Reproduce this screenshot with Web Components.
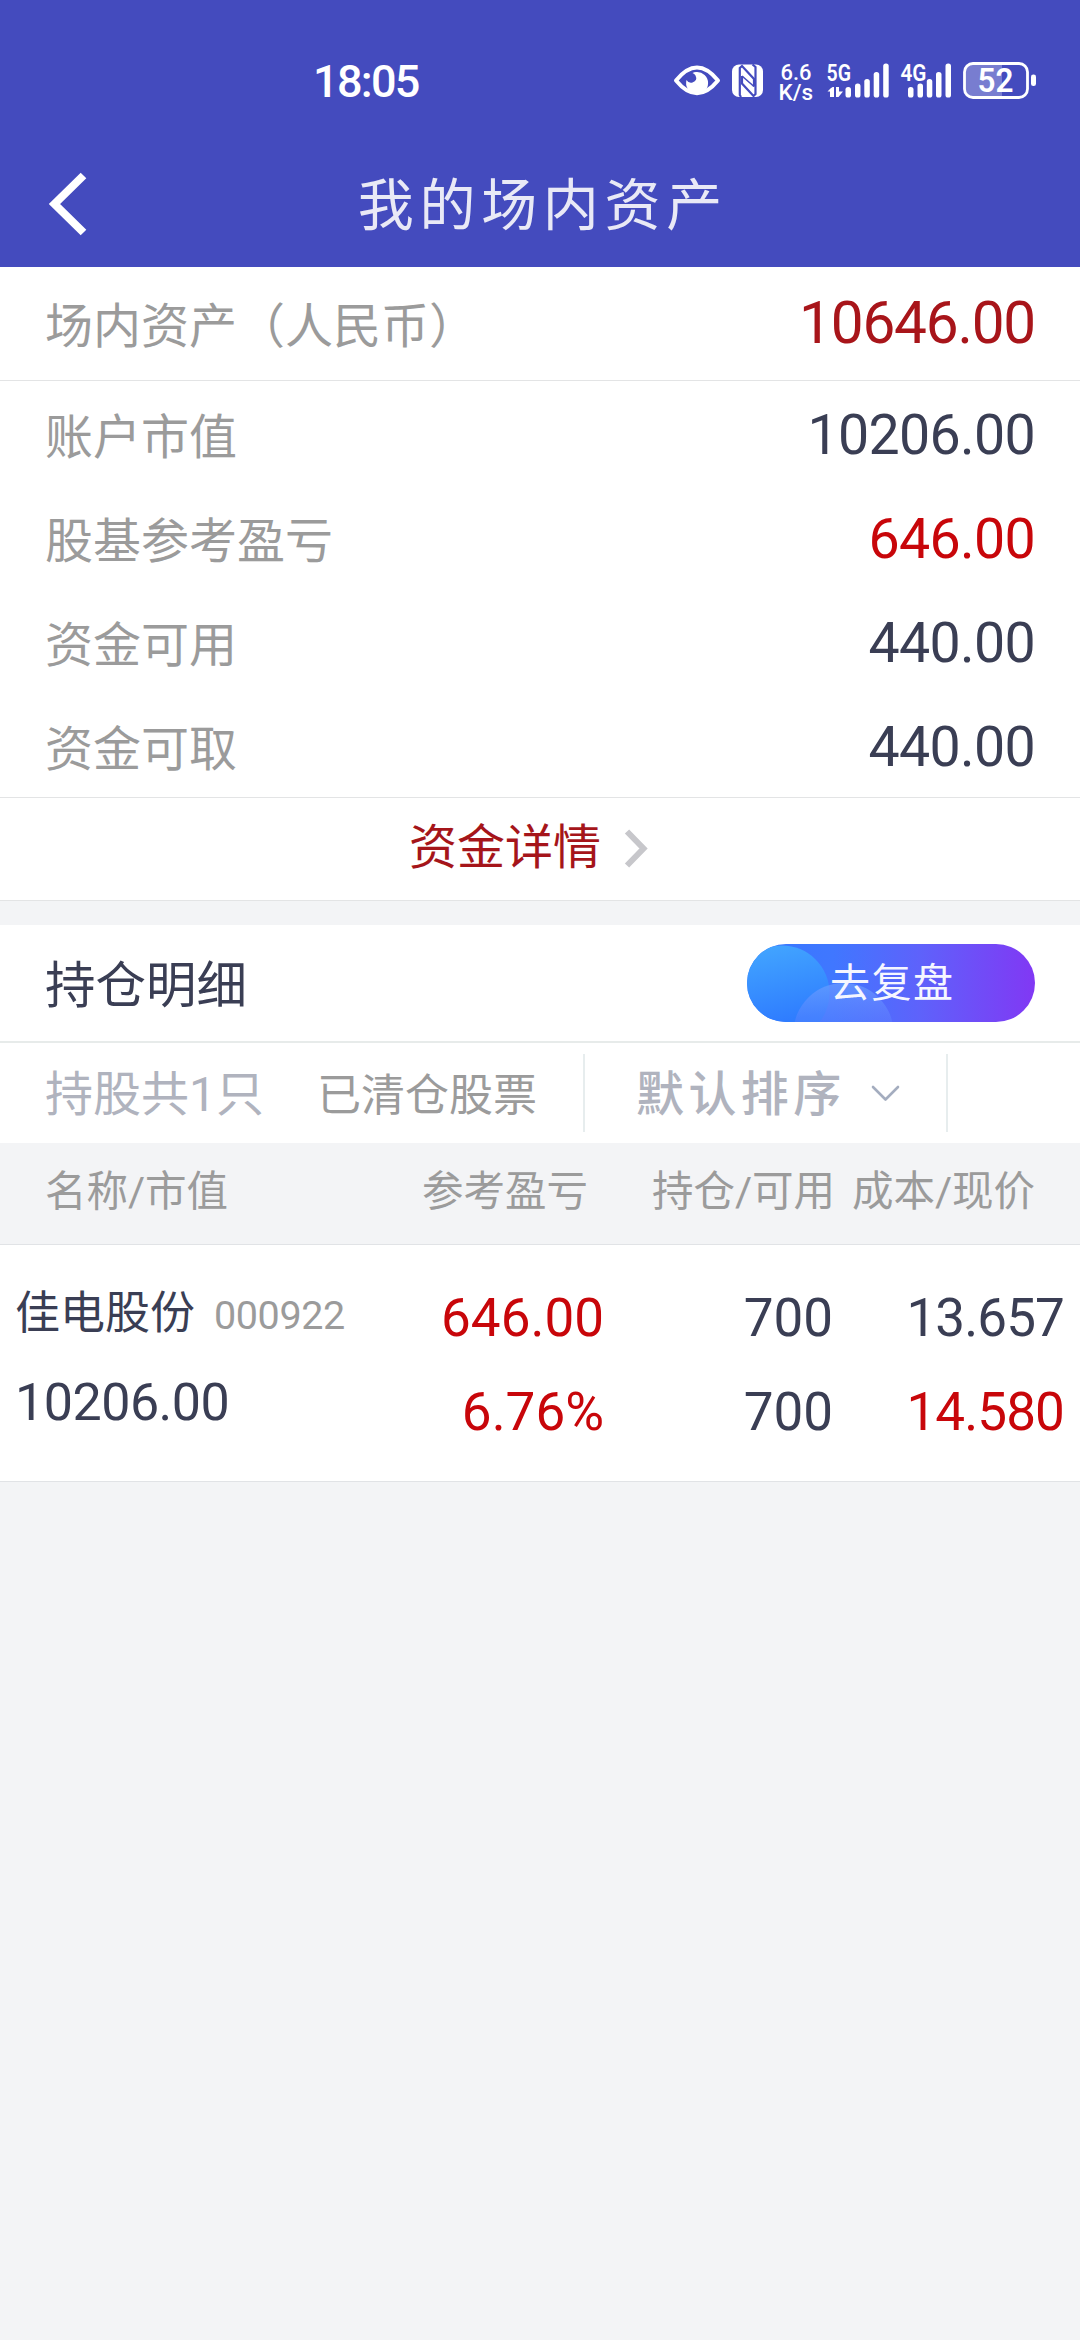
<!DOCTYPE html>
<html lang="zh-CN">
<head>
<meta charset="utf-8">
<title>我的场内资产</title>
<style>
html,body{margin:0;padding:0}
body{width:1080px;min-height:2340px;background:#f3f4f6;color:#3a3e54;font-family:Roboto,"Noto Sans CJK SC",sans-serif;font-size:48px;-webkit-font-smoothing:antialiased;overflow-x:hidden}
</style>
</head>
<body>
<asset-page></asset-page>
<script>
const define = (name, html) => {
  const t = document.createElement('template');
  t.innerHTML = html;
  customElements.define(name, class extends HTMLElement {
    constructor() {
      super();
      this.attachShadow({ mode: 'open' }).appendChild(t.content.cloneNode(true));
    }
  });
};

define('status-bar', `
<style>
:host{display:flex;height:138px;background:#444bbe;color:#fff;box-sizing:border-box;padding:54px 44px 0 313px;justify-content:space-between;align-items:flex-start}
.time{font-size:45px;font-weight:500;line-height:55px;letter-spacing:-1.700px;white-space:nowrap}
svg{display:block;fill:#fff;font-family:Roboto,sans-serif}
</style>
<span class="time">18:05</span>
<svg width="364" height="54" viewBox="672 54 364 54">
  <path d="M676 80.500Q697 54.500 718 80.500Q697 106 676 80.500Z" fill="none" stroke="#fff" stroke-width="4" stroke-linejoin="round"/>
  <path d="M696 72A11 11 0 1 1 686.500 80Q688.500 83.500 692.500 82.500Q698 80.500 695.500 75.500Q694.500 73.500 692.500 73Q694 72 696 72Z"/>
  <rect x="732" y="64.500" width="31" height="32.500" rx="7"/>
  <g fill="none" stroke="#444bbe" stroke-width="2.200"><path d="M741 97L739.800 95V68L742 66L754 79V86.500"/><path d="M752.500 64.500L755.500 67V94L753.500 96L742 83.500V76"/><path d="M742 76L754 86.500" stroke-width="1.600"/></g>
  <text x="780.500" y="79.500" font-size="22" font-weight="500" textLength="31" lengthAdjust="spacingAndGlyphs">6.6</text>
  <text x="778.500" y="100" font-size="22.500" font-weight="500" textLength="34.500" lengthAdjust="spacingAndGlyphs">K/s</text>
  <text x="826.500" y="80.500" font-size="23" font-weight="600" textLength="24.500" lengthAdjust="spacingAndGlyphs">5G</text>
  <path d="M831.500 97V87.500L827.500 91.500H830V97ZM832.500 87L828 91.500H831V97H834V87ZM836 87H839V91.500L843 91.500L838.500 97H836Z"/>
  <g><rect x="845.500" y="87" width="5.500" height="10.500" rx="2.600"/><rect x="855" y="83.500" width="5.500" height="14" rx="2.600"/><rect x="864.300" y="79" width="5.500" height="18.500" rx="2.600"/><rect x="873.700" y="72" width="5.500" height="25.500" rx="2.600"/><rect x="883.200" y="63.500" width="5.500" height="34" rx="2.600"/></g>
  <text x="900.500" y="80.500" font-size="23" font-weight="600" textLength="26" lengthAdjust="spacingAndGlyphs">4G</text>
  <g><rect x="908" y="87" width="5.500" height="10.500" rx="2.600"/><rect x="917.500" y="83.500" width="5.500" height="14" rx="2.600"/><rect x="926.800" y="79" width="5.500" height="18.500" rx="2.600"/><rect x="936" y="72" width="5.500" height="25.500" rx="2.600"/><rect x="945.500" y="63.500" width="5.500" height="34" rx="2.600"/></g>
  <path d="M1002 64H973Q965 64 965 72V89Q965 97 973 97H1002Z" opacity=".28"/>
  <rect x="964.500" y="63.500" width="63" height="34" rx="8.500" fill="none" stroke="#fff" stroke-width="2.800"/>
  <rect x="1031" y="74.500" width="5" height="11.500" rx="2.300"/>
  <text x="977.500" y="92" font-size="33" font-weight="600" textLength="36" lengthAdjust="spacingAndGlyphs">52</text>
</svg>`);

define('nav-bar', `
<style>
:host{display:grid;grid-template-columns:90px 1fr 90px;height:129px;background:#444bbe;color:#e9e9f6}
svg{display:block;margin:34px 0 0 48px}
.t{text-align:center;font-size:56px;letter-spacing:5.700px;text-indent:5.700px;line-height:137px;height:129px;white-space:nowrap}
</style>
<svg width="40" height="66" viewBox="48 172 40 66"><path d="M83.500 175.500L54.500 204L83.500 232.500" fill="none" stroke="#fff" stroke-width="8"/></svg>
<div class="t"><slot></slot></div><span></span>`);

define('asset-row', `
<style>
:host{display:flex;box-sizing:border-box;height:104px;padding:3px 45px 0 45px;justify-content:space-between;align-items:baseline;line-height:104px;white-space:nowrap}
:host([total]){height:114px;padding-top:0;line-height:113px;border-bottom:1px solid #e3e4e5}
.l{color:#9b9b9b;font-size:48px}
.v{font-size:55.500px;letter-spacing:-.700px}
:host([total]) .v{font-size:58.500px;color:#a8151a;letter-spacing:-1.200px}
:host([up]) .v{color:#c8060a}
</style>
<span class="l"><slot></slot></span><span class="v"><slot name="value"></slot></span>`);

define('fund-link', `
<style>
:host{display:flex;box-sizing:border-box;height:104px;border-top:1px solid #e3e4e5;border-bottom:1px solid #e3e4e5;background:#fff;color:#a5151a;padding-left:409px;line-height:100px;align-items:flex-start}
svg{display:block;margin:30px 0 0 20px}
</style>
<span><slot></slot></span>
<svg width="28" height="42" viewBox="0 0 28 42"><path d="M6 3.500L22.500 20.500L6 37.500" fill="none" stroke="#c7c7cb" stroke-width="6"/></svg>`);

define('review-button', `
<style>
:host{display:grid;width:288px;height:78px;border-radius:39px;overflow:hidden;color:#f5f6ff}
svg,span{grid-area:1/1;display:block}
span{font-size:40px;letter-spacing:1.500px;line-height:80px;padding-left:83px;white-space:nowrap;z-index:1}
</style>
<svg width="288" height="78" viewBox="0 0 288 78">
<defs>
<linearGradient id="g"><stop offset="0" stop-color="#3578ff"/><stop offset=".3" stop-color="#4077ff"/><stop offset=".6" stop-color="#5e62fb"/><stop offset="1" stop-color="#8138f4"/></linearGradient>
<linearGradient id="a" x1=".3" y1="0" x2=".5" y2="1"><stop offset="0" stop-color="#42a5ff"/><stop offset=".8" stop-color="#2f7dff"/></linearGradient>
<linearGradient id="b" x1="0" y1="0" x2="0" y2="1"><stop offset="0" stop-color="#70a0ff" stop-opacity=".65"/><stop offset=".45" stop-color="#6080ff" stop-opacity=".35"/></linearGradient>
</defs>
<rect width="288" height="78" fill="url(#g)"/><circle cx="35" cy="49" r="47.500" fill="url(#a)"/><circle cx="96.500" cy="89" r="50" fill="url(#b)"/>
</svg><span><slot></slot></span>`);

define('section-head', `
<style>
:host{display:flex;box-sizing:border-box;height:118px;margin-top:24px;padding:0 45px;background:#fff;border-bottom:2px solid #e7ebea;align-items:center;justify-content:space-between}
.t{font-size:50.500px;line-height:111px;padding-top:5px}
</style>
<span class="t"><slot></slot></span><slot name="action"></slot>`);

define('sort-bar', `
<style>
:host{display:flex;height:100px;background:#fff;line-height:78px;white-space:nowrap;box-sizing:border-box;padding:11px 0 11px 45px}
span{height:78px;padding-top:2px;box-sizing:border-box}
.n{width:272px;color:#b0b3be}
.c{width:266px;font-size:44px;color:#9b9b9b;padding-top:3px}
.s{display:flex;box-sizing:border-box;width:365px;height:78px;border:solid #e7edee;border-width:0 2px;color:#b0b3be;padding-left:51px}
.s span{font-weight:500;letter-spacing:4.400px}
svg{display:block;margin:29px 0 0 24px}
</style>
<span class="n"><slot name="count"></slot></span><span class="c"><slot name="cleared"></slot></span>
<div class="s"><span><slot name="order"></slot></span><svg width="32" height="20" viewBox="0 0 32 20"><path d="M3 4L15.500 16.500L28 4" fill="none" stroke="#a4adbf" stroke-width="2.600" stroke-linecap="round" stroke-linejoin="round"/></svg></div>`);

define('table-head', `
<style>
:host{display:grid;box-sizing:border-box;height:102px;grid-template-columns:350px 193px 247px 200px;padding-left:45px;border-bottom:1px solid #e1e3e6;color:#9b9b9b;font-size:41.500px;line-height:97px;white-space:nowrap}
::slotted(:not(:first-child)){text-align:right}
</style><slot></slot>`);

define('stock-row', `
<style>
:host{display:grid;box-sizing:border-box;height:237px;grid-template-columns:400px 189px 229px 231px;padding:26px 0 0 15px;background:#fff;border-bottom:1px solid #e1e3e6;font-size:53px;white-space:nowrap}
.c{display:flex;flex-direction:column;align-items:flex-end;line-height:94px}
.c:last-child{letter-spacing:-.900px}
.n{align-items:flex-start;margin-top:-6px}
.h{font-size:45px;margin-top:3px;height:89px;line-height:92px}
.n ::slotted([slot=code]){font-size:39.500px;color:#9b9b9b;margin-left:19px;letter-spacing:-.400px}
.m{font-size:52px;line-height:92px;letter-spacing:-.500px}
.p{color:#c8060a}
</style>
<div class="c n"><div class="h"><slot name="name"></slot><slot name="code"></slot></div><div class="m"><slot name="market"></slot></div></div>
<div class="c p"><slot name="profit"></slot><slot name="rate"></slot></div>
<div class="c"><slot name="held"></slot><slot name="free"></slot></div>
<div class="c"><slot name="cost"></slot><span class="p"><slot name="price"></slot></span></div>`);

define('asset-page', `
<style>:host{display:block}.card{background:#fff}</style>
<status-bar></status-bar>
<nav-bar>我的场内资产</nav-bar>
<div class="card">
<asset-row total>场内资产（人民币）<span slot="value">10646.00</span></asset-row>
<asset-row>账户市值<span slot="value">10206.00</span></asset-row>
<asset-row up>股基参考盈亏<span slot="value">646.00</span></asset-row>
<asset-row>资金可用<span slot="value">440.00</span></asset-row>
<asset-row>资金可取<span slot="value">440.00</span></asset-row>
</div>
<fund-link>资金详情</fund-link>
<section-head>持仓明细<review-button slot="action">去复盘</review-button></section-head>
<sort-bar><span slot="count">持股共1只</span><span slot="cleared">已清仓股票</span><span slot="order">默认排序</span></sort-bar>
<table-head><span>名称/市值</span><span>参考盈亏</span><span>持仓/可用</span><span>成本/现价</span></table-head>
<stock-row><span slot="name">佳电股份</span><span slot="code">000922</span><span slot="market">10206.00</span><span slot="profit">646.00</span><span slot="rate">6.76%</span><span slot="held">700</span><span slot="free">700</span><span slot="cost">13.657</span><span slot="price">14.580</span></stock-row>`);
</script>
</body>
</html>
